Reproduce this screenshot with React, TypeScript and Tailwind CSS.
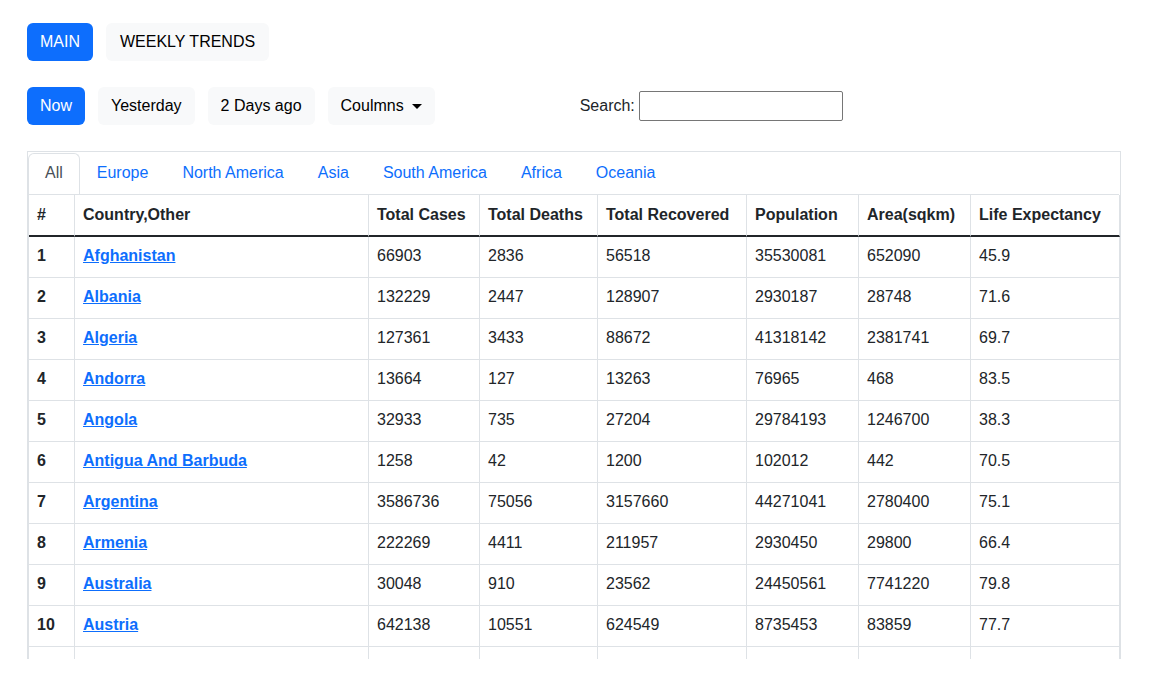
import React from "react";

const rows: [number, string, string, string, string, string, string, string][] = [
  [1, "Afghanistan", "66903", "2836", "56518", "35530081", "652090", "45.9"],
  [2, "Albania", "132229", "2447", "128907", "2930187", "28748", "71.6"],
  [3, "Algeria", "127361", "3433", "88672", "41318142", "2381741", "69.7"],
  [4, "Andorra", "13664", "127", "13263", "76965", "468", "83.5"],
  [5, "Angola", "32933", "735", "27204", "29784193", "1246700", "38.3"],
  [6, "Antigua And Barbuda", "1258", "42", "1200", "102012", "442", "70.5"],
  [7, "Argentina", "3586736", "75056", "3157660", "44271041", "2780400", "75.1"],
  [8, "Armenia", "222269", "4411", "211957", "2930450", "29800", "66.4"],
  [9, "Australia", "30048", "910", "23562", "24450561", "7741220", "79.8"],
  [10, "Austria", "642138", "10551", "624549", "8735453", "83859", "77.7"],
];

const tabs = ["All", "Europe", "North America", "Asia", "South America", "Africa", "Oceania"];

const cell = "border-r border-b border-[#dee2e6] px-2 pt-[7px] pb-[9px] leading-6 text-left align-top";

export default function App() {
  return (
    <div
      className="h-[659px] overflow-hidden bg-white text-[16px] text-[#212529]"
      style={{ fontFamily: '"Liberation Sans", Arial, sans-serif' }}
    >
      <div className="px-[27px] pt-[23px]">
        <div className="flex gap-[13px]">
          <button className="rounded-[6px] bg-[#0d6efd] px-[13px] py-[7px] leading-6 text-white">MAIN</button>
          <button className="rounded-[6px] bg-[#f8f9fa] px-[14px] py-[7px] leading-6 text-black">WEEKLY TRENDS</button>
        </div>
        <div className="mt-[26px] flex items-center">
          <div className="flex gap-[13px]">
            <button className="rounded-[6px] bg-[#0d6efd] px-[13px] py-[7px] leading-6 text-white">Now</button>
            <button className="rounded-[6px] bg-[#f8f9fa] px-[13px] py-[7px] leading-6 text-black">Yesterday</button>
            <button className="rounded-[6px] bg-[#f8f9fa] px-[13px] py-[7px] leading-6 text-black">2 Days ago</button>
            <button className="flex items-center rounded-[6px] bg-[#f8f9fa] px-[13px] py-[7px] leading-6 text-black">
              Coulmns
              <span className="ml-[8px] inline-block h-0 w-0 border-x-[5px] border-t-[5px] border-x-transparent border-t-black" />
            </button>
          </div>
          <div className="ml-[145px] flex items-center gap-[4px]">
            <span>Search:</span>
            <input className="h-[30px] w-[204px] rounded-[2px] border border-[#767676] px-1 outline-none" />
          </div>
        </div>
        <div className="mt-[26px] w-[1094px] border border-[#dee2e6] pt-px">
          <div className="w-[1091px]">
            <div className="flex border-b border-[#dee2e6]">
              {tabs.map((t, i) => (
                <div
                  key={t}
                  className={
                    i === 0
                      ? "rounded-t-[6px] border-x border-t border-[#dee2e6] px-4 pt-[7px] pb-[9px] leading-6 text-[#495057]"
                      : "border-x border-t border-transparent px-4 pt-[7px] pb-[9px] leading-6 text-[#0d6efd]"
                  }
                >
                  {t}
                </div>
              ))}
            </div>
            <table className="w-[1091px] table-fixed border-separate border-spacing-0 border-l border-[#dee2e6]">
              <thead>
                <tr className="font-bold">
                  {[
                    ["#", "w-[46px]"],
                    ["Country,Other", "w-[294px]"],
                    ["Total Cases", "w-[111px]"],
                    ["Total Deaths", "w-[118px]"],
                    ["Total Recovered", "w-[149px]"],
                    ["Population", "w-[112px]"],
                    ["Area(sqkm)", "w-[112px]"],
                    ["Life Expectancy", "w-[149px]"],
                  ].map(([h, w]) => (
                    <th
                      key={h}
                      className={`${w} border-r border-b-2 border-r-[#dee2e6] border-b-[#212529] px-2 py-2 text-left align-top leading-6 font-bold whitespace-nowrap`}
                    >
                      {h}
                    </th>
                  ))}
                </tr>
              </thead>
              <tbody>
                {rows.map((r) => (
                  <tr key={r[0]}>
                    <td className={`${cell} font-bold`}>{r[0]}</td>
                    <td className={cell}>
                      <a href="#" className="font-bold text-[#0d6efd] underline">
                        {r[1]}
                      </a>
                    </td>
                    {r.slice(2).map((v, j) => (
                      <td key={j} className={cell}>
                        {v}
                      </td>
                    ))}
                  </tr>
                ))}
                <tr>
                  {Array.from({ length: 8 }).map((_, j) => (
                    <td key={j} className={cell}>
                      {"\u00a0"}
                    </td>
                  ))}
                </tr>
              </tbody>
            </table>
          </div>
        </div>
      </div>
    </div>
  );
}
